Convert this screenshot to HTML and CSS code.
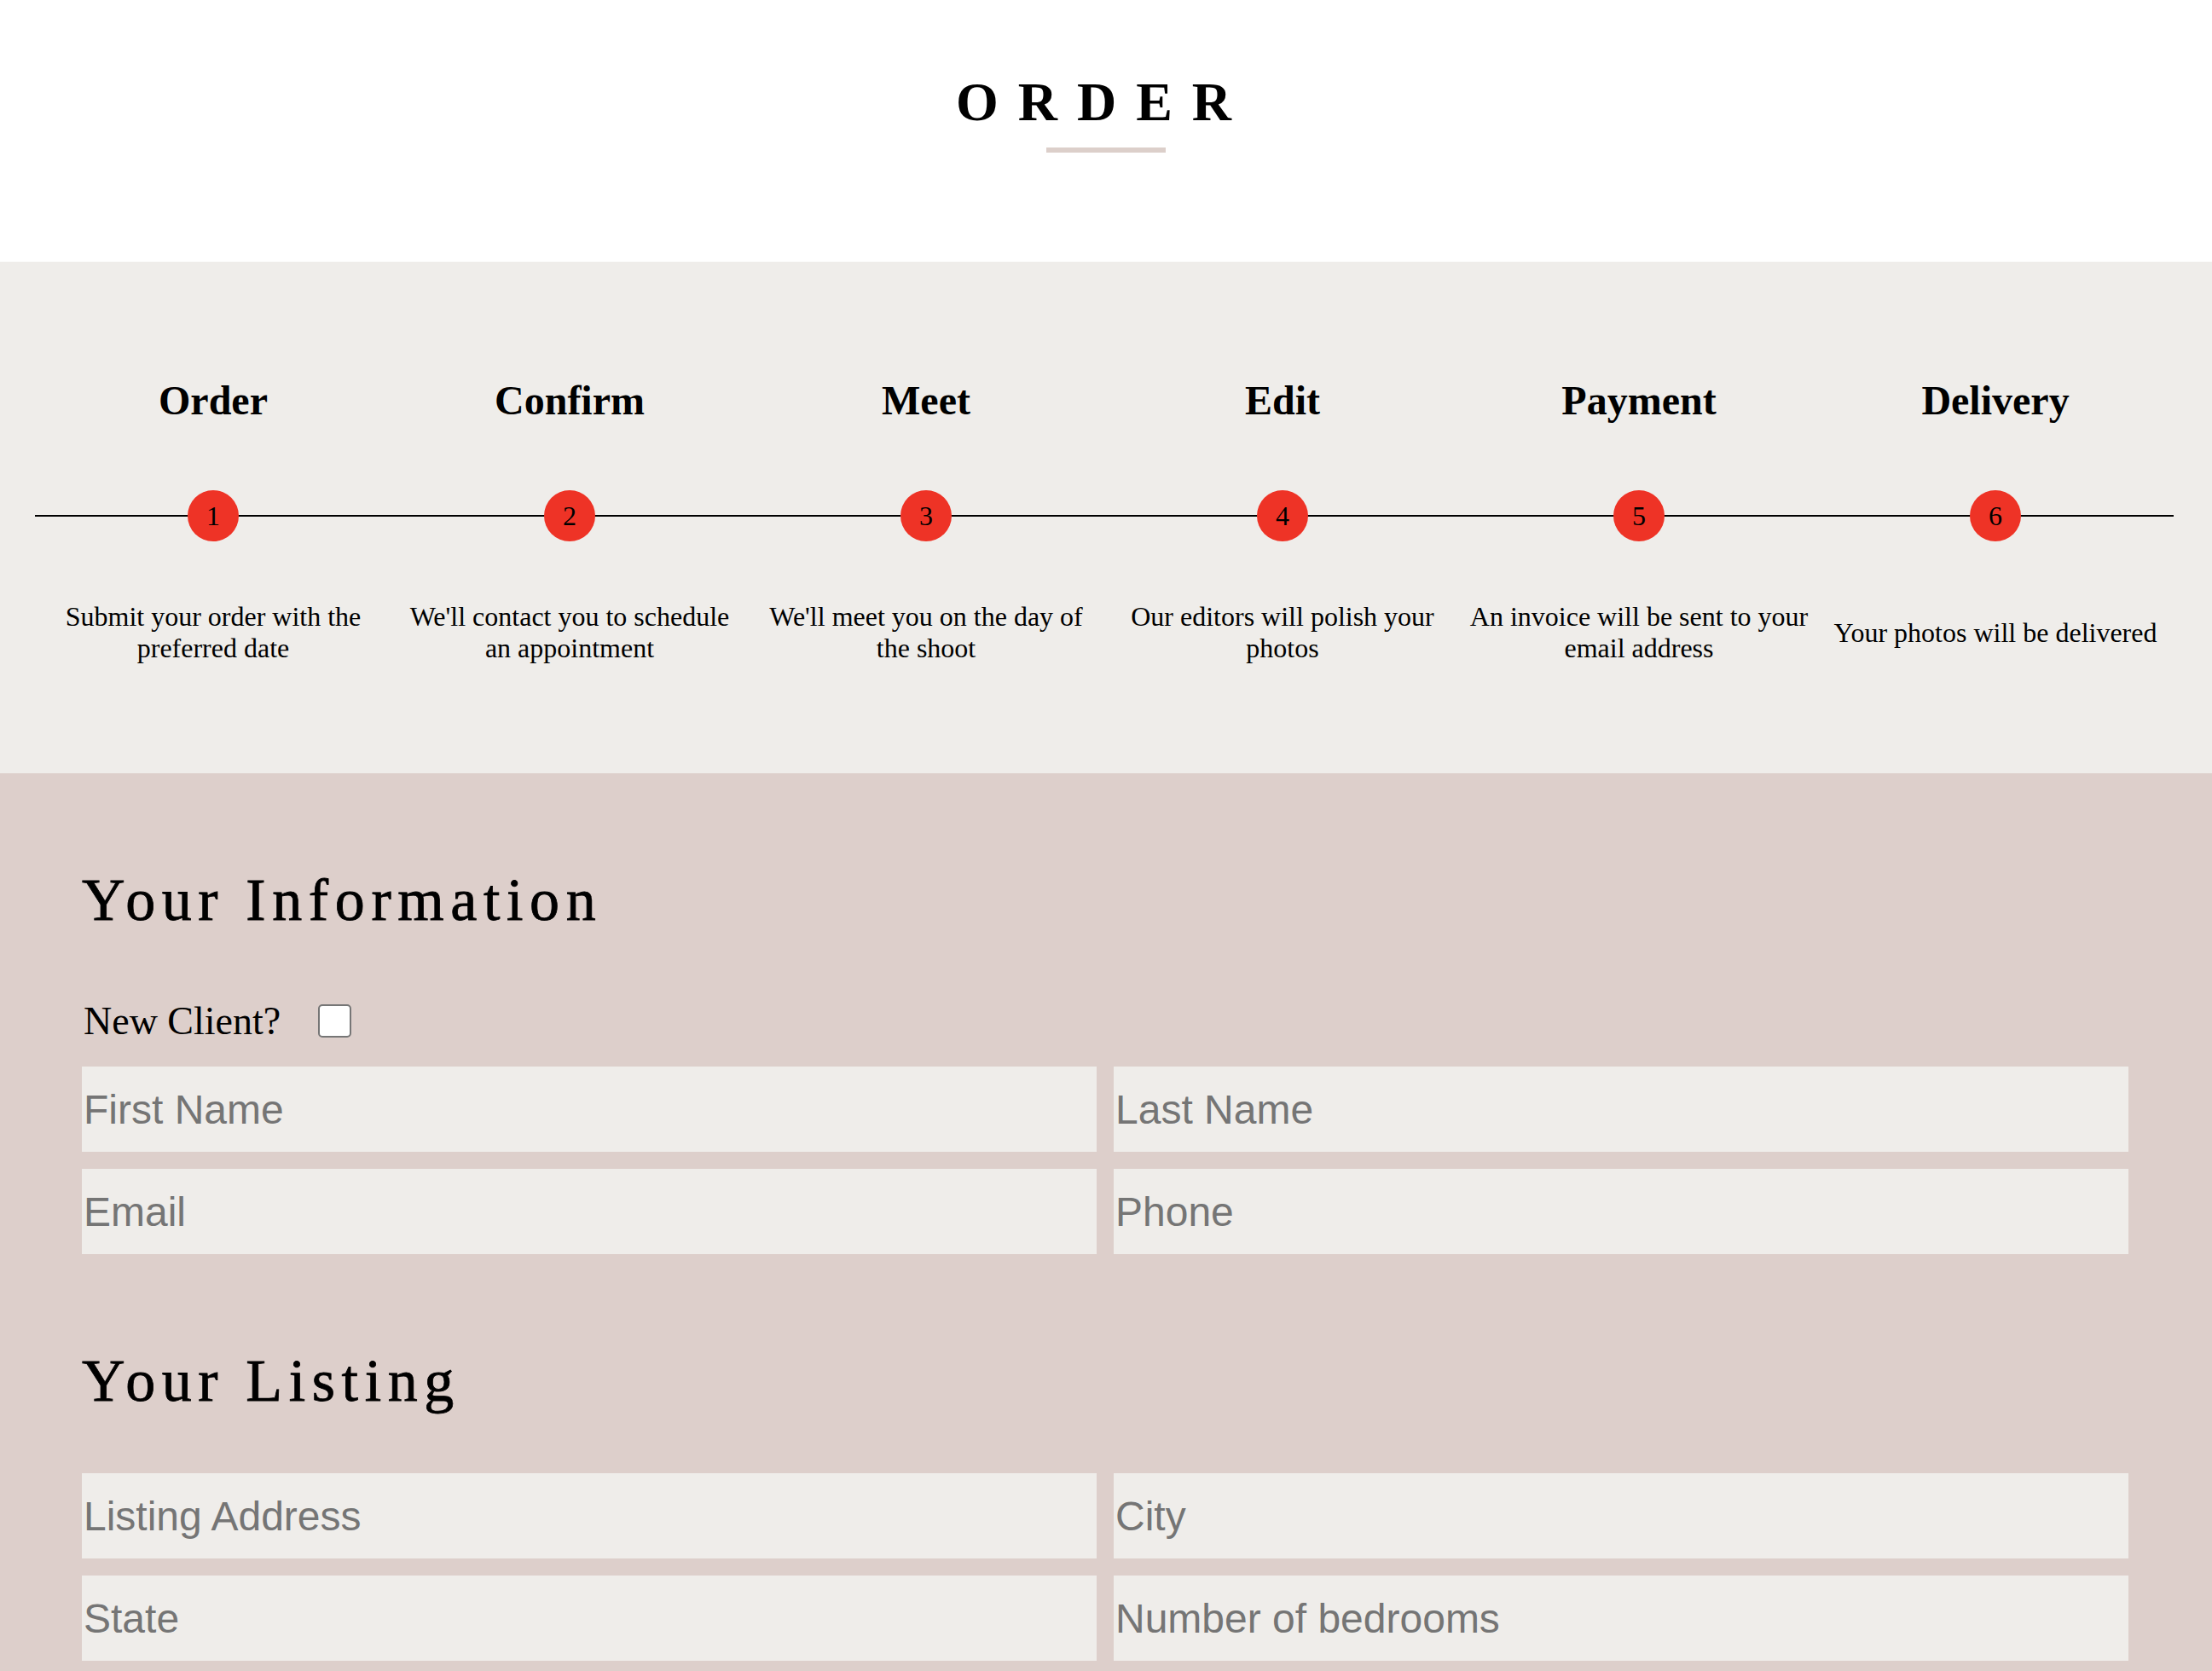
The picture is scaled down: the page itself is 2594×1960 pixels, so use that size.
FILE: index.html
```html
<!DOCTYPE html>
<html lang="en">
<head>
<meta charset="utf-8">
<title>Order</title>
<link rel="stylesheet" href="styles.css">
</head>
<body>
<header class="page-head">
  <h1 class="page-title">ORDER</h1>
  <div class="title-rule"></div>
</header>

<section class="steps">
  <div class="step">
    <h2 class="step-title">Order</h2>
    <div class="step-marker"><span class="step-dot">1</span></div>
    <p class="step-desc">Submit your order with the preferred date</p>
  </div>
  <div class="step">
    <h2 class="step-title">Confirm</h2>
    <div class="step-marker"><span class="step-dot">2</span></div>
    <p class="step-desc">We'll contact you to schedule an appointment</p>
  </div>
  <div class="step">
    <h2 class="step-title">Meet</h2>
    <div class="step-marker"><span class="step-dot">3</span></div>
    <p class="step-desc">We'll meet you on the day of the shoot</p>
  </div>
  <div class="step">
    <h2 class="step-title">Edit</h2>
    <div class="step-marker"><span class="step-dot">4</span></div>
    <p class="step-desc">Our editors will polish your photos</p>
  </div>
  <div class="step">
    <h2 class="step-title">Payment</h2>
    <div class="step-marker"><span class="step-dot">5</span></div>
    <p class="step-desc">An invoice will be sent to your email address</p>
  </div>
  <div class="step">
    <h2 class="step-title">Delivery</h2>
    <div class="step-marker"><span class="step-dot">6</span></div>
    <p class="step-desc">Your photos will be delivered</p>
  </div>
</section>

<section class="form-section">
  <form class="order-form">
    <h2 class="form-heading heading-info">Your Information</h2>
    <div class="client-row">
      <label class="client-label" for="newclient">New Client?</label>
      <input class="client-check" type="checkbox" id="newclient">
    </div>
    <div class="field-grid">
      <input class="field" type="text" placeholder="First Name">
      <input class="field" type="text" placeholder="Last Name">
      <input class="field" type="email" placeholder="Email">
      <input class="field" type="tel" placeholder="Phone">
    </div>

    <h2 class="form-heading heading-listing">Your Listing</h2>
    <div class="field-grid">
      <input class="field" type="text" placeholder="Listing Address">
      <input class="field" type="text" placeholder="City">
      <input class="field" type="text" placeholder="State">
      <input class="field" type="text" placeholder="Number of bedrooms">
    </div>
  </form>
</section>
</body>
</html>
```

FILE: styles.css
```css
html, body {
  margin: 0;
  padding: 0;
}

body {
  background: #ffffff;
  color: #000000;
  font-family: "Liberation Serif", "Times New Roman", serif;
}

/* ---------- header ---------- */
.page-head {
  padding: 83px 0 128px;
  display: flex;
  flex-direction: column;
  align-items: center;
}

.page-title {
  margin: 0 0 0 -6px;
  font-family: "Liberation Serif", serif;
  font-weight: 700;
  font-size: 64px;
  line-height: normal;
  letter-spacing: 23px;
}

.title-rule {
  margin-top: 16px;
  width: 140px;
  height: 6px;
  background: #dccfca;
}

/* ---------- steps ---------- */
.steps {
  background: #efedea;
  padding: 135px 45px 128px 41px;
  display: grid;
  grid-template-columns: repeat(6, 1fr);
}

.step {
  display: flex;
  flex-direction: column;
  align-items: stretch;
  text-align: center;
}

.step-title {
  margin: 0;
  font-size: 48px;
  font-weight: 700;
  line-height: 55px;
}

.step-marker {
  position: relative;
  margin-top: 78px;
  height: 60px;
  display: flex;
  justify-content: center;
  align-items: center;
}

.step-marker::before {
  content: "";
  position: absolute;
  left: 0;
  right: 0;
  top: 29px;
  height: 2px;
  background: #000000;
}

.step-dot {
  position: relative;
  width: 60px;
  height: 60px;
  border-radius: 50%;
  background: #ee3326;
  display: flex;
  justify-content: center;
  align-items: center;
  font-size: 32px;
  line-height: 1;
}

.step-desc {
  margin: 70px 0 0;
  padding: 0 10px;
  min-height: 74px;
  display: flex;
  align-items: center;
  justify-content: center;
  font-size: 32px;
  line-height: normal;
}

/* ---------- form ---------- */
.form-section {
  background: #ddcfcb;
  padding: 109px 98px 40px 96px;
}

.order-form {
  display: flex;
  flex-direction: column;
}

.form-heading {
  margin: 0;
  font-family: "Liberation Serif", serif;
  font-weight: 400;
  font-size: 70px;
  line-height: normal;
  letter-spacing: 7.6px;
  -webkit-text-stroke: 0.8px #000000;
}

.heading-info {
  margin-bottom: 75px;
}

.heading-listing {
  margin-top: 109px;
  margin-bottom: 68px;
}

.client-row {
  display: flex;
  align-items: center;
  margin-bottom: 27px;
}

.client-label {
  font-size: 46px;
  line-height: normal;
  padding-left: 2px;
}

.client-check {
  appearance: none;
  -webkit-appearance: none;
  margin: 0 0 0 44px;
  width: 39px;
  height: 39px;
  background: #ffffff;
  border: 2px solid #767676;
  border-radius: 5px;
  box-sizing: border-box;
}

.field-grid {
  display: grid;
  grid-template-columns: 1fr 1fr;
  gap: 20px;
}

.field {
  box-sizing: border-box;
  height: 100px;
  width: 100%;
  border: none;
  margin: 0;
  padding: 1px 2px;
  background: #efedea;
  font-family: "Liberation Sans", Arial, sans-serif;
  font-size: 48px;
  color: #222222;
  outline: none;
}

.field::placeholder {
  color: #757575;
  opacity: 1;
}
```
